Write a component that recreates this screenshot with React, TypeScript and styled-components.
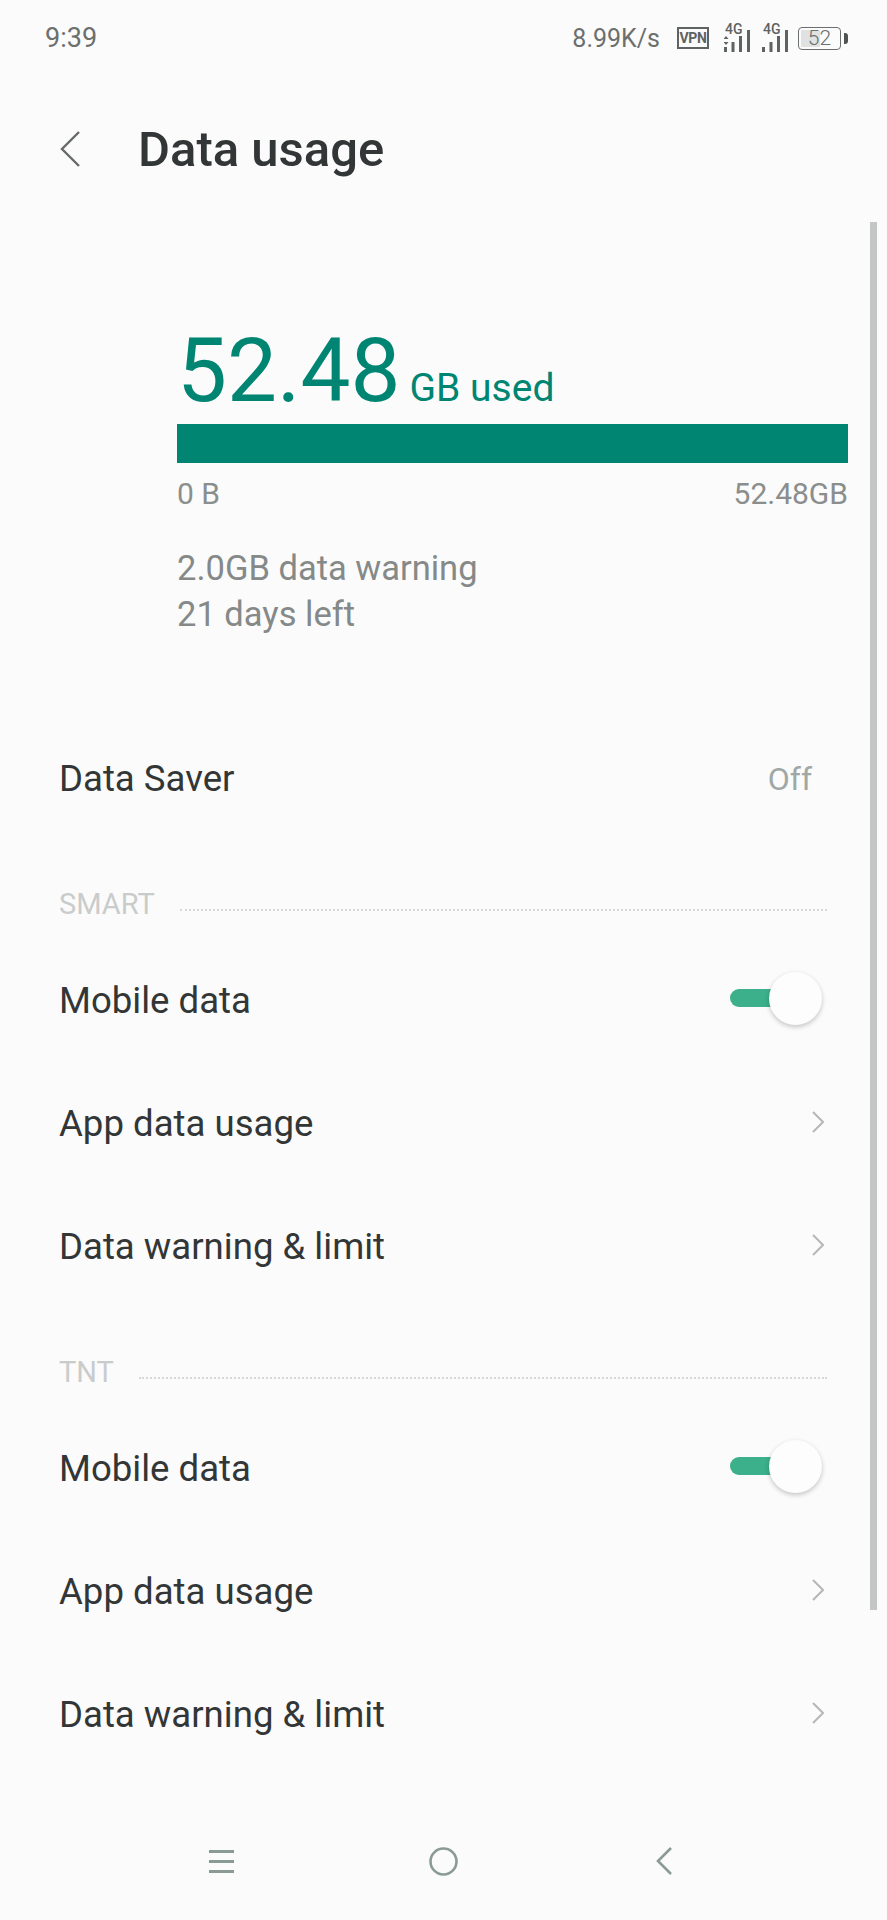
import React from "react";
import styled, { createGlobalStyle } from "styled-components";

const GlobalStyle = createGlobalStyle`
  html, body {
    margin: 0;
    padding: 0;
    background: #fbfbfb;
  }
  * {
    box-sizing: border-box;
  }
`;

const Screen = styled.div`
  position: relative;
  width: 887px;
  height: 1920px;
  overflow: hidden;
  display: flex;
  flex-direction: column;
  background: #fbfbfb;
  font-family: Roboto, "Liberation Sans", sans-serif;
`;

const StatusBar = styled.div`
  height: 76px;
  padding: 0 39px 0 45px;
  display: flex;
  align-items: center;
  justify-content: space-between;
  color: #6b6f6e;
`;

const Time = styled.span`
  font-size: 27px;
`;

const StatusRight = styled.div`
  display: flex;
  align-items: center;
`;

const Speed = styled.span`
  font-size: 25px;
  margin-right: 17px;
`;

const VpnBox = styled.span`
  width: 32px;
  height: 22px;
  border: 2px solid #5e6261;
  font-size: 14px;
  font-weight: 700;
  letter-spacing: -0.4px;
  line-height: 18px;
  text-align: center;
  margin-right: 15px;
  color: #5e6261;
`;

const SignalWrap = styled.span<{ $gap: number }>`
  position: relative;
  width: 26px;
  height: 28px;
  margin-right: ${(props) => props.$gap}px;
  display: block;
`;

const SignalLabel = styled.span`
  position: absolute;
  left: 1px;
  top: -1px;
  font-size: 14px;
  font-weight: 500;
  line-height: 12px;
  color: #5e6261;
`;

const Battery = styled.span`
  position: relative;
  width: 43px;
  height: 23px;
  border: 1.5px solid #6b6f6e;
  border-radius: 4px;
  padding: 2px;
  display: block;
`;

const BatteryFill = styled.span`
  display: block;
  width: 52%;
  height: 100%;
  background: #dfe2e1;
  border-radius: 1px;
`;

const BatteryText = styled.span`
  position: absolute;
  left: 0;
  right: 0;
  top: 0;
  font-size: 21px;
  font-weight: 300;
  line-height: 20px;
  text-align: center;
`;

const BatteryNub = styled.span`
  width: 4px;
  height: 11px;
  margin-left: 3px;
  background: #4f5352;
  border-radius: 0 3px 3px 0;
`;

const Header = styled.div`
  margin-top: 26px;
  height: 94px;
  padding-left: 60px;
  display: flex;
  align-items: center;
`;

const BackButton = styled.svg`
  width: 20px;
  height: 36px;
  margin-right: 58px;
`;

const Title = styled.h1`
  margin: 0;
  font-size: 49px;
  font-weight: 500;
  color: #333636;
`;

const Summary = styled.div`
  margin-top: 130px;
  padding: 0 39px 0 177px;
`;

const UsedRow = styled.div`
  height: 90px;
  display: flex;
  align-items: baseline;
  color: #008573;
`;

const UsedValue = styled.span`
  font-size: 89px;
  line-height: 90px;
  margin-right: 9px;
`;

const UsedUnit = styled.span`
  font-size: 39px;
`;

const UsageBar = styled.div`
  height: 39px;
  margin-top: 8px;
  background: #008573;
`;

const Scale = styled.div`
  margin-top: 13px;
  display: flex;
  justify-content: space-between;
  font-size: 30px;
  line-height: 36px;
  color: #8a8e8d;
`;

const Notes = styled.div`
  margin-top: 33px;
  font-size: 34.5px;
  line-height: 46px;
  color: #858988;
`;

const Row = styled.div`
  height: 123px;
  padding: 0 64px 0 59px;
  display: flex;
  align-items: center;
  justify-content: space-between;
  font-size: 36.6px;
  color: #333636;
`;

const FirstRows = styled.div`
  margin-top: 80px;
`;

const RowValue = styled.span`
  margin-right: 11px;
  font-size: 32px;
  color: #a0a8a5;
`;

const Section = styled.div`
  margin-top: 44px;
`;

const SectionHead = styled.div`
  height: 40px;
  margin-bottom: 15px;
  padding: 0 60px 0 59px;
  display: flex;
  align-items: center;
  gap: 25px;
  font-size: 29px;
  color: #c9cccb;
`;

const DottedLine = styled.span`
  flex: 1;
  margin-top: 12px;
  border-top: 2px dotted #d5d8d7;
`;

const ToggleWrap = styled.span`
  position: relative;
  width: 92px;
  height: 54px;
  margin: -4px 1px 0 0;
  display: block;
`;

const ToggleTrack = styled.span`
  position: absolute;
  left: 0;
  top: 17px;
  width: 50px;
  height: 18px;
  border-radius: 9px 0 0 9px;
  background: #3bb08a;
`;

const ToggleThumb = styled.span`
  position: absolute;
  right: 0;
  top: 0;
  width: 53px;
  height: 53px;
  border-radius: 50%;
  background: #fdfdfd;
  box-shadow: 0 2px 5px rgba(0, 0, 0, 0.22);
`;

const Chevron = styled.svg`
  width: 12px;
  height: 22px;
  margin: -4px -1px 0 0;
`;

const NavBar = styled.div`
  margin-top: auto;
  height: 118px;
  padding: 0 215px 0 209px;
  display: flex;
  align-items: center;
  justify-content: space-between;
  color: #8a9a94;
`;

const ScrollThumb = styled.div`
  position: absolute;
  left: 870px;
  top: 222px;
  width: 7px;
  height: 1388px;
  background: #c4c6c5;
`;

const Signal = ({ gap, active }: { gap: number; active?: boolean }) => (
  <SignalWrap $gap={gap}>
    <SignalLabel>4G</SignalLabel>
    <svg width="26" height="28" viewBox="0 0 26 28">
      <g fill="#5e6261">
        {active && (
          <>
            <path d="M2 12l2.5 3h-5z" />
            <path d="M2 21l2.5-3h-5z" />
          </>
        )}
        <rect x="0" y="23" width="3" height="5" />
        <rect x="7.5" y="18" width="3" height="10" />
        <rect x="15" y="12" width="3" height="16" />
        <rect x="23" y="6" width="3" height="22" />
      </g>
    </svg>
  </SignalWrap>
);

const Toggle = () => (
  <ToggleWrap>
    <ToggleTrack />
    <ToggleThumb />
  </ToggleWrap>
);

const RowArrow = () => (
  <Chevron viewBox="0 0 12 22">
    <path d="M1 1l10 10L1 21" fill="none" stroke="#b5b8b7" strokeWidth="2" />
  </Chevron>
);

const SimSection = ({ name }: { name: string }) => (
  <Section>
    <SectionHead>
      {name}
      <DottedLine />
    </SectionHead>
    <Row>
      Mobile data
      <Toggle />
    </Row>
    <Row>
      App data usage
      <RowArrow />
    </Row>
    <Row>
      Data warning &amp; limit
      <RowArrow />
    </Row>
  </Section>
);

const App: React.FC = () => {
  return (
    <Screen>
      <GlobalStyle />
      <StatusBar>
        <Time>9:39</Time>
        <StatusRight>
          <Speed>8.99K/s</Speed>
          <VpnBox>VPN</VpnBox>
          <Signal gap={12} active />
          <Signal gap={10} />
          <Battery>
            <BatteryFill />
            <BatteryText>52</BatteryText>
          </Battery>
          <BatteryNub />
        </StatusRight>
      </StatusBar>

      <Header>
        <BackButton viewBox="0 0 20 36">
          <path d="M19 1L2 18l17 17" fill="none" stroke="#666a69" strokeWidth="2.4" />
        </BackButton>
        <Title>Data usage</Title>
      </Header>

      <Summary>
        <UsedRow>
          <UsedValue>52.48</UsedValue>
          <UsedUnit>GB used</UsedUnit>
        </UsedRow>
        <UsageBar />
        <Scale>
          <span>0 B</span>
          <span>52.48GB</span>
        </Scale>
        <Notes>
          2.0GB data warning
          <br />
          21 days left
        </Notes>
      </Summary>

      <FirstRows>
        <Row>
          Data Saver
          <RowValue>Off</RowValue>
        </Row>
      </FirstRows>

      <SimSection name="SMART" />
      <SimSection name="TNT" />

      <NavBar>
        <svg width="25" height="23" viewBox="0 0 25 23">
          <g fill="currentColor">
            <rect width="25" height="3" />
            <rect y="10" width="25" height="3" />
            <rect y="20" width="25" height="3" />
          </g>
        </svg>
        <svg width="29" height="29" viewBox="0 0 29 29">
          <circle cx="14.5" cy="14.5" r="13" fill="none" stroke="currentColor" strokeWidth="2.6" />
        </svg>
        <svg width="19" height="28" viewBox="0 0 19 28">
          <path d="M18 1L5 14l13 13" fill="none" stroke="currentColor" strokeWidth="2.6" />
        </svg>
      </NavBar>

      <ScrollThumb />
    </Screen>
  );
};

export default App;
